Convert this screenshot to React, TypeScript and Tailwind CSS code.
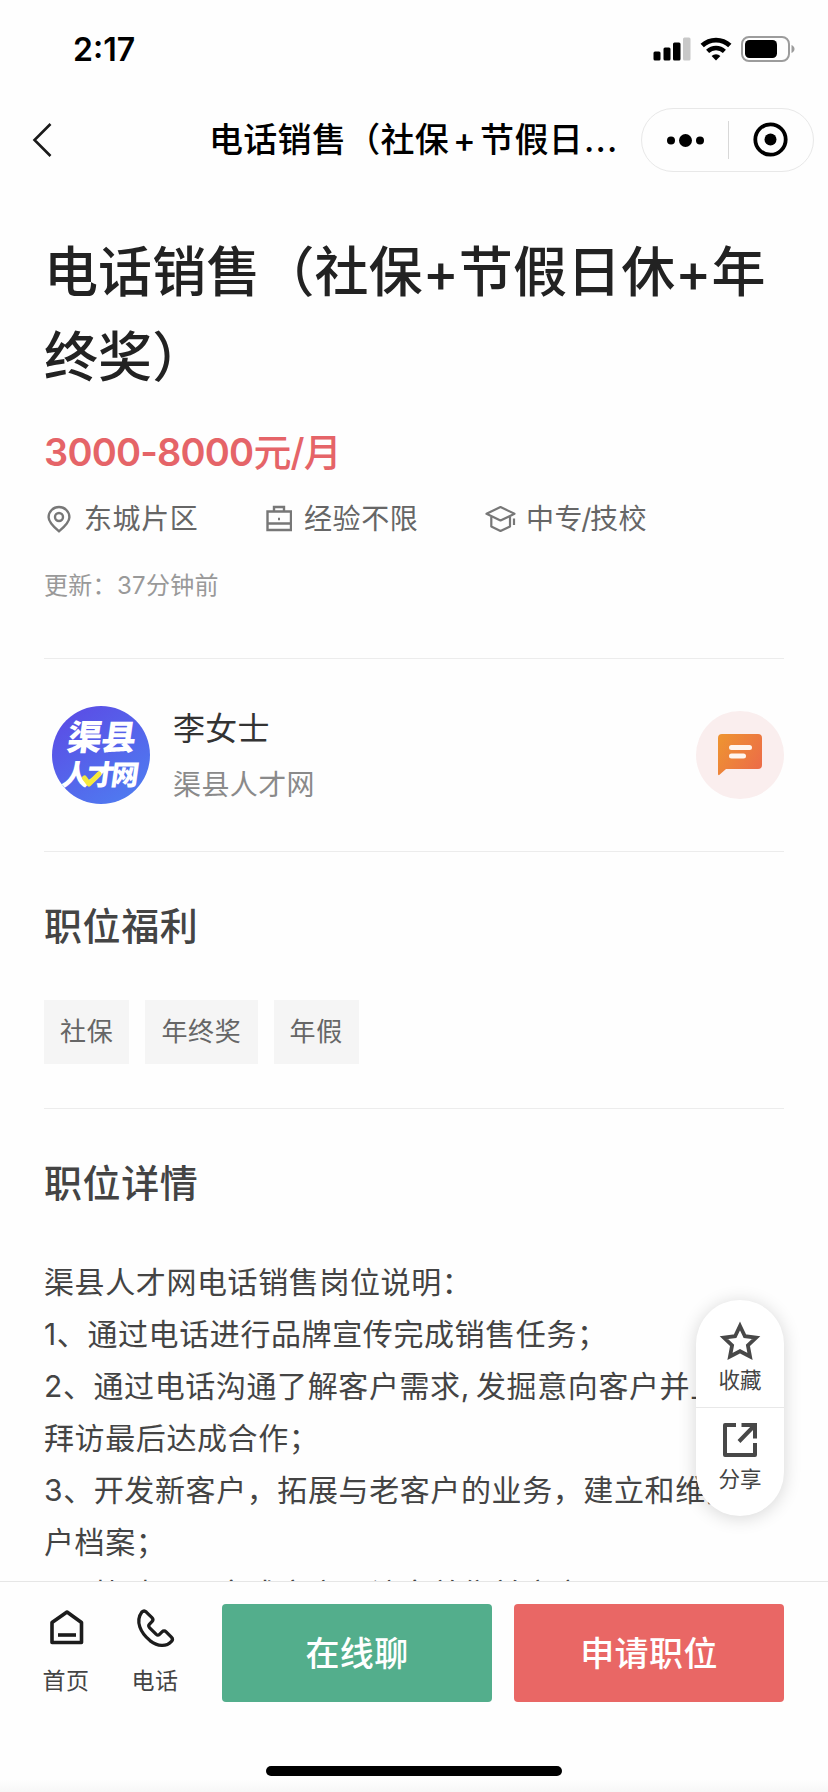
import type { ReactNode } from "react";

const benefits = ["社保", "年终奖", "年假"];

const detailLines = [
  "渠县人才网电话销售岗位说明：",
  "1、通过电话进行品牌宣传完成销售任务；",
  "2、通过电话沟通了解客户需求, 发掘意向客户并上门",
  "拜访最后达成合作；",
  "3、开发新客户，拓展与老客户的业务，建立和维护客",
  "户档案；",
  "4、协助公司完成客户回访完善售前方案",
];

function StatusBar() {
  return (
    <div className="flex h-[98px] shrink-0 items-center justify-between pr-[33px] pl-[73px]">
      <span className="pt-[2px] text-[32px] leading-none font-semibold text-black">2:17</span>
      <div className="flex items-center gap-[9px]">
        <svg width="38" height="24" viewBox="0 0 38 24">
          <rect x="0.5" y="14.5" width="7" height="9" rx="1.5" />
          <rect x="10.5" y="10.5" width="7" height="13" rx="1.5" />
          <rect x="20" y="5.5" width="7.5" height="18" rx="1.5" />
          <rect x="30" y="0.5" width="7.5" height="23" rx="1.5" fill="#c8c8c8" />
        </svg>
        <svg width="32" height="24" viewBox="0 0 32 24">
          <path d="M2.2 8.6a20 20 0 0 1 27.6 0" fill="none" stroke="#000" strokeWidth="4.8" />
          <path d="M7.6 14.4a12.2 12.2 0 0 1 16.8 0" fill="none" stroke="#000" strokeWidth="4.4" />
          <path d="M16 23.6l-4.4-4.5a6.4 6.4 0 0 1 8.8 0z" />
        </svg>
        <svg width="54" height="26" viewBox="0 0 54 26">
          <rect x="1" y="1" width="47" height="24" rx="7" fill="none" stroke="#9c9c9c" strokeWidth="2" />
          <rect x="4" y="4" width="32" height="18" rx="4.5" />
          <path d="M50.5 9c4 1.4 4 6.600 0 8z" fill="#9c9c9c" />
        </svg>
      </div>
    </div>
  );
}

function NavBar() {
  return (
    <div className="flex h-[84px] shrink-0 items-center pr-[14px] pl-[32px]">
      <svg width="20" height="36" viewBox="0 0 20 36" fill="none" stroke="#1a1a1a" strokeWidth="2.6">
        <path d="M18.5 2L2.5 18l16 16" />
      </svg>
      <div className="ml-[157px] w-[432px] text-[34px] leading-[48px] font-medium tracking-[0.3px] whitespace-nowrap text-black">
        电话销售（社保<span className="mx-[4px]">+</span>节假日
        <span className="ml-[1px] tracking-[1.2px]">...</span>
      </div>
      <div className="flex h-[64px] w-[173px] items-center rounded-full border border-[#e8e8e8]">
        <svg width="86" height="40" viewBox="0 0 86 40">
          <circle cx="29" cy="20.5" r="4" />
          <circle cx="43.5" cy="20.5" r="6.5" />
          <circle cx="58" cy="20.5" r="4" />
        </svg>
        <span className="h-[38px] w-px bg-[#d8d8d8]" />
        <svg width="84" height="40" viewBox="0 0 84 40">
          <circle cx="41.5" cy="19.5" r="15.2" fill="none" stroke="#000" strokeWidth="3.800" />
          <circle cx="41.5" cy="19.5" r="6" />
        </svg>
      </div>
    </div>
  );
}

function MetaItem({ icon, label }: { icon: ReactNode; label: ReactNode }) {
  return (
    <div className="flex items-center">
      {icon}
      <span className="text-[28px] leading-[40px] tracking-[0.6px] whitespace-nowrap text-[#666]">{label}</span>
    </div>
  );
}

function JobHeader() {
  return (
    <section className="h-[477px] border-b border-[#ececec] pt-[48px]">
      <h1 className="text-[54px] leading-[85px] font-medium tracking-[0.1px] whitespace-nowrap text-[#222]">
        电话销售（社保+节假日休+年
        <br />
        终奖）
      </h1>
      <p className="mt-[22px] text-[38px] leading-[60px] font-semibold tracking-[-0.8px] text-[#e56468]">
        3000-8000<span className="font-medium">元/月</span>
      </p>
      <div className="mt-[17px] flex h-[40px]">
        <div className="w-[221px]">
          <MetaItem
            label="东城片区"
            icon={
              <svg className="mr-[12px] ml-[2px]" width="26" height="28" viewBox="0 0 26 28" fill="none" stroke="#777" strokeWidth="2.4">
                <path d="M13 26.3C8.5 22.5 2.6 17.6 2.6 12.2a10.4 10.2 0 0 1 20.8 0c0 5.4-5.9 10.3-10.4 14.1z" />
                <circle cx="13" cy="12" r="4" />
              </svg>
            }
          />
        </div>
        <div className="w-[221px]">
          <MetaItem
            label="经验不限"
            icon={
              <svg className="mr-[12px]" width="27" height="28" viewBox="0 0 27 28" fill="none" stroke="#777" strokeWidth="2.4">
                <path d="M2.500 6.500h23.500v18.500H2.500zM2.500 18.500h23.500M9 6.500V2h10v4.500" />
                <path d="M13 14h2" />
              </svg>
            }
          />
        </div>
        <MetaItem
          label={
            <>
              中专<span className="-mx-[2px]">/</span>技校
            </>
          }
          icon={
            <svg className="mr-[9px] -ml-[1px]" width="32" height="28" viewBox="0 0 32 28" fill="none" stroke="#777" strokeWidth="2.2" strokeLinejoin="round">
              <path d="M15.5 2l14 6.800-14 6.700-14-6.700z" />
              <path d="M6.3 12v9.500l9.200 4.500 9.500-4.500V12M29 13.500V20" />
            </svg>
          }
        />
      </div>
      <p className="mt-[29px] text-[24px] leading-[36px] tracking-[0.3px] text-[#999]">更新：37分钟前</p>
    </section>
  );
}

function Recruiter() {
  return (
    <section className="flex h-[193px] items-center border-b border-[#ececec]">
      <svg className="ml-[8px]" width="98" height="98" viewBox="0 0 98 98">
        <defs>
          <linearGradient id="avatar" x1="0.2" y1="0.1" x2="0.8" y2="0.95">
            <stop offset="0" stopColor="#5a50e6" />
            <stop offset="1" stopColor="#4f7af0" />
          </linearGradient>
        </defs>
        <circle cx="49" cy="49" r="49" fill="url(#avatar)" />
        <g fill="#fff" fontWeight="900" transform="skewX(-8)">
          <text x="20" y="44" fontSize="35" textLength="69">渠县</text>
          <text x="20" y="79.500" fontSize="28" textLength="77">人才网</text>
        </g>
        <path d="M32.500 72l4.500 6L47 68" fill="none" stroke="#f5e93c" strokeWidth="5" strokeLinecap="round" strokeLinejoin="round" />
      </svg>
      <div className="ml-[23px] flex-1">
        <p className="text-[32px] leading-[46px] tracking-[0.3px] text-[#333]">李女士</p>
        <p className="mt-[13px] text-[28px] leading-[40px] tracking-[0.4px] text-[#8a8a8a]">渠县人才网</p>
      </div>
      <div className="flex size-[88px] items-center justify-center rounded-full bg-[#faeeee]">
        <svg width="44" height="42" viewBox="0 0 44 42">
          <defs>
            <linearGradient id="bubble" x1="0" y1="0.2" x2="1" y2="0.8">
              <stop offset="0" stopColor="#ee9232" />
              <stop offset="1" stopColor="#ec6c48" />
            </linearGradient>
          </defs>
          <path d="M4 0h36a4 4 0 0 1 4 4v27a4 4 0 0 1-4 4H8l-6.500 5.800C.8 41.500 0 41 0 40V4a4 4 0 0 1 4-4z" fill="url(#bubble)" />
          <path d="M13.5 13.5h18M13.5 22h12" stroke="#fff5ee" strokeWidth="5" strokeLinecap="round" />
        </svg>
      </div>
    </section>
  );
}

function FloatingActions() {
  return (
    <div className="absolute top-[1300px] left-[696px] flex h-[216px] w-[88px] flex-col rounded-full bg-white text-[21.5px] leading-[30px] text-[#444] shadow-[0_2px_18px_rgba(0,0,0,0.16)]">
      <div className="flex h-[108px] flex-col items-center border-b border-[#e8e8e8] pt-[20px]">
        <svg width="42" height="42" viewBox="0 0 42 42" fill="none" stroke="#484848" strokeWidth="3.8">
          <path d="M21 6l4.900 10.200 11.200 1.400-8.200 7.800 2.100 11.100L21 31.200 11 36.500l2.100-11.100-8.200-7.800 11.200-1.400z" />
        </svg>
        <span className="mt-[3px]">收藏</span>
      </div>
      <div className="flex flex-col items-center pt-[13px]">
        <svg width="38" height="38" viewBox="0 0 38 38" fill="none" stroke="#484848" strokeWidth="4">
          <path d="M15 4H4v30h30V22" strokeLinejoin="round" />
          <path d="M20.5 4H34v13.500M33 5L18 20.500" />
        </svg>
        <span className="mt-[5px]">分享</span>
      </div>
    </div>
  );
}

function BottomBar() {
  return (
    <footer className="flex h-[211px] shrink-0 flex-col border-t border-[#e6e6e6] bg-[#fefefe]">
      <div className="flex pt-[22px] pl-[43px]">
        <div className="flex w-[46px] flex-col items-center pt-[4px]">
          <svg width="40" height="40" viewBox="0 0 40 40" fill="none" stroke="#1c1c1c" strokeWidth="3.6" strokeLinejoin="round">
            <path d="M6 14.500L21 4l14.500 10.500V34.500H6z" />
            <path d="M12 27H30" />
          </svg>
          <span className="mt-[16px] text-[23px] leading-[34px] tracking-[0.5px] whitespace-nowrap text-[#444]">首页</span>
        </div>
        <div className="ml-[43px] flex w-[46px] flex-col items-center pt-[3px]">
          <svg width="42" height="42" viewBox="0 0 40 40" fill="none" stroke="#1c1c1c" strokeWidth="3.1" strokeLinejoin="round">
            <path d="M7.5 4.800c1.300-1.200 2.900-1.200 4.200 0l5.400 5.300c1.200 1.200 1.200 2.600 0 3.900l-2.300 2.400c-1 1-1 2.100-.1 3.200l6.500 6.500c1 .9 2.100.9 3.100-.1l2.400-2.300c1.200-1.200 2.700-1.200 3.900 0l5 5c1.300 1.300 1.300 2.800.1 4.100-5 5.500-13 5-20.500-.8C6.500 24.900.800 13.800 7.500 4.800z" />
          </svg>
          <span className="mt-[15px] text-[23px] leading-[34px] tracking-[0.5px] whitespace-nowrap text-[#444]">电话</span>
        </div>
        <button className="ml-[44px] h-[98px] w-[270px] rounded-[4px] bg-[#53ae8c] text-[34px] font-medium tracking-[0.4px] text-white">
          在线聊
        </button>
        <button className="ml-[22px] h-[98px] w-[270px] rounded-[4px] bg-[#e96765] text-[34px] font-medium tracking-[0.4px] text-white">
          申请职位
        </button>
      </div>
      <div className="mx-auto mt-[64px] h-[10px] w-[296px] rounded-full bg-black" />
      <div className="mt-auto h-[12px] bg-gradient-to-b from-[#fefefe] to-[#f7f7f7]" />
    </footer>
  );
}

export default function App() {
  return (
    <div className="relative flex h-[1792px] w-[828px] flex-col overflow-hidden bg-[#fefefe] font-[Inter,'Noto_Sans_CJK_SC',sans-serif]">
      <StatusBar />
      <NavBar />
      <main className="min-h-0 flex-1 overflow-hidden px-[44px]">
        <JobHeader />
        <Recruiter />
        <section className="h-[257px] border-b border-[#ececec] pt-[46px]">
          <h2 className="text-[38px] leading-[56px] font-medium tracking-[0.6px] text-[#444]">职位福利</h2>
          <div className="mt-[46px] flex gap-[16px]">
            {benefits.map((b) => (
              <span key={b} className="h-[64px] bg-[#f5f5f5] px-[16px] text-[26px] leading-[63px] tracking-[0.7px] text-[#666]">
                {b}
              </span>
            ))}
          </div>
        </section>
        <section className="pt-[46px]">
          <h2 className="text-[38px] leading-[56px] font-medium tracking-[0.6px] text-[#444]">职位详情</h2>
          <div className="mt-[45px] text-[30px] leading-[52px] tracking-[0.6px] [word-spacing:-3px] whitespace-nowrap text-[#444]">
            {detailLines.map((line) => (
              <p key={line}>{line}</p>
            ))}
          </div>
        </section>
      </main>
      <FloatingActions />
      <BottomBar />
    </div>
  );
}
